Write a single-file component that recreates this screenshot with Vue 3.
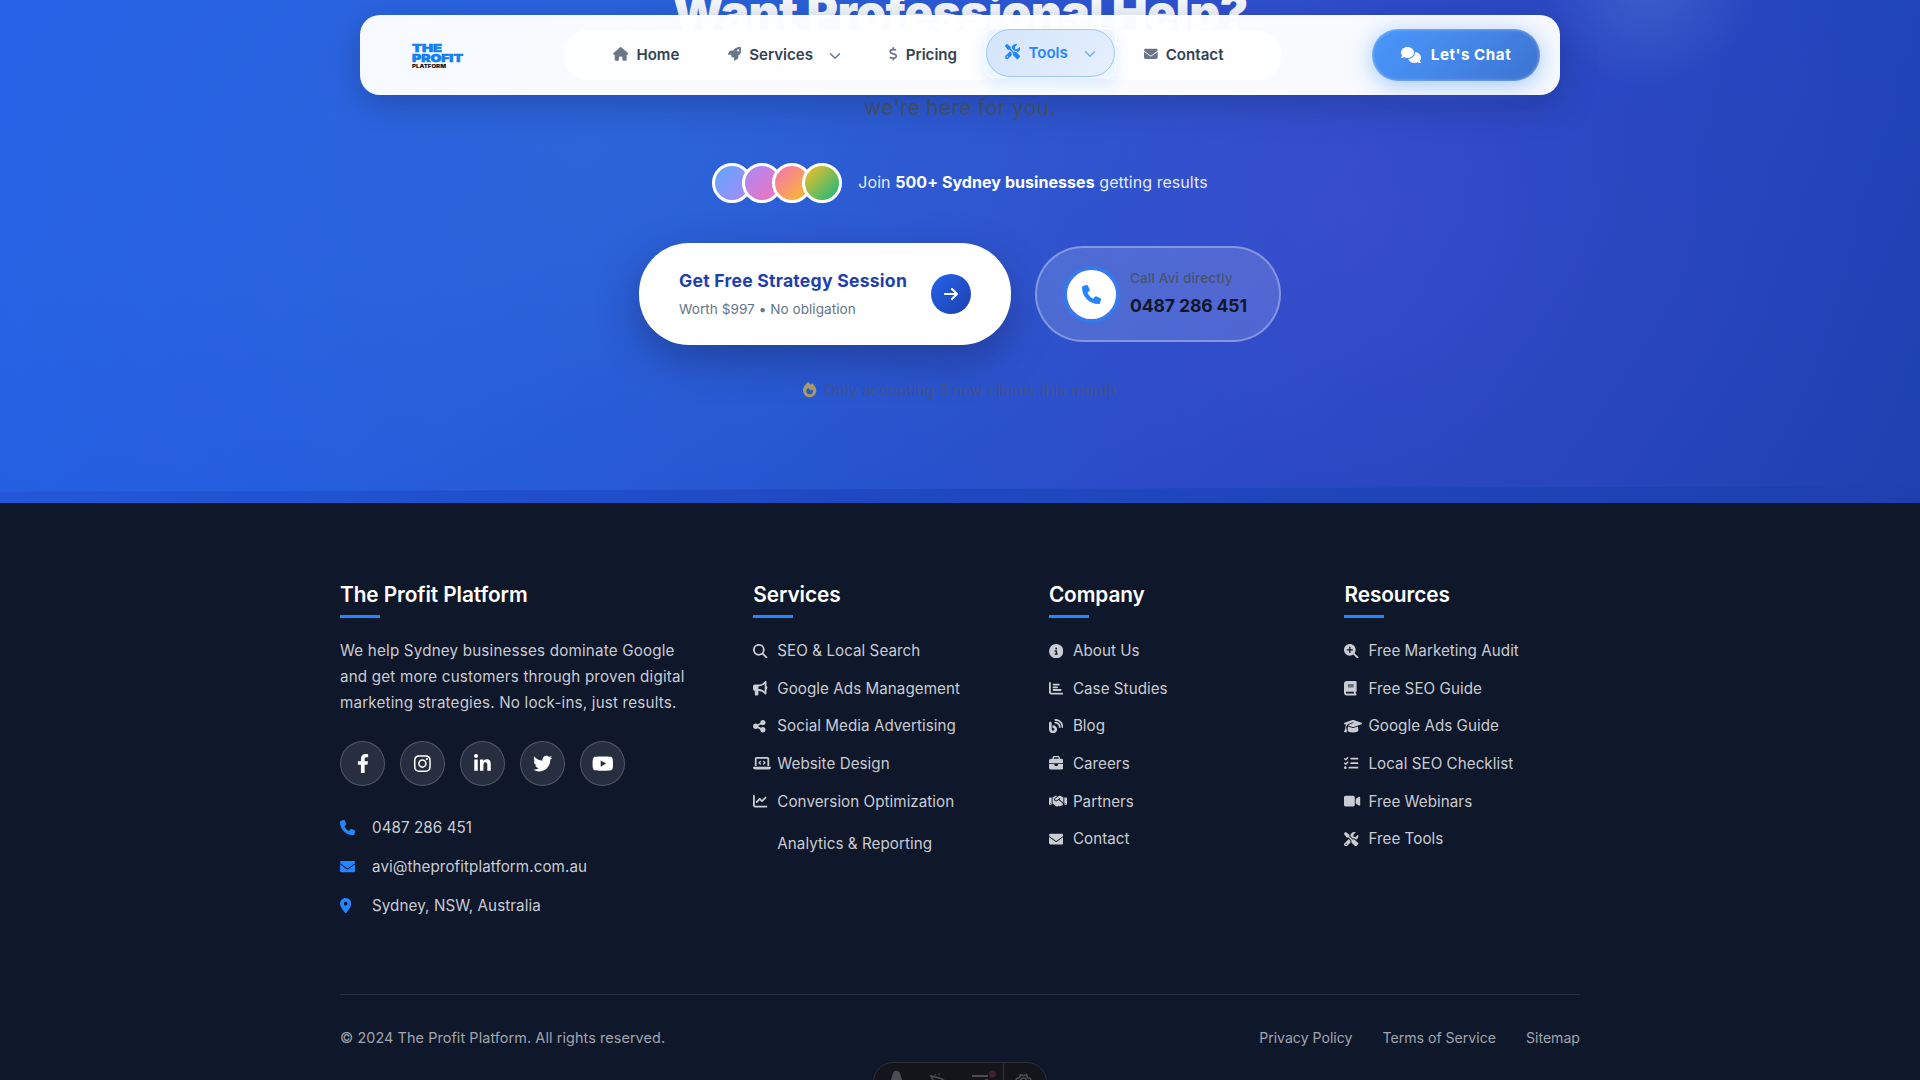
<script setup>
import { h } from 'vue'

const icons = {
  house: [576, 512, 'M575.8 255.5c0 18-15 32.1-32 32.1h-32l.7 160.2c0 2.7-.2 5.4-.5 8.1V472c0 22.1-17.9 40-40 40H456c-1.1 0-2.2 0-3.3-.1c-1.4 .1-2.8 .1-4.2 .1H416 392c-22.1 0-40-17.9-40-40V448 384c0-17.7-14.3-32-32-32H256c-17.7 0-32 14.3-32 32v64 24c0 22.1-17.9 40-40 40H160 128.1c-1.5 0-3-.1-4.5-.2c-1.2 .1-2.4 .2-3.6 .2H104c-22.1 0-40-17.9-40-40V360c0-.9 0-1.9 .1-2.8V287.6H32c-18 0-32-14-32-32.1c0-9 3-17 10-24L266.4 8c7-7 15-8 22-8s15 2 21 7L564.8 231.5c8 7 12 15 11 24z'],
  rocket: [512, 512, 'M156.6 384.9L125.7 354c-8.5-8.5-11.5-20.8-7.7-32.2c3-8.9 7-20.5 11.8-33.8L24 288c-8.6 0-16.6-4.6-20.9-12.1s-4.2-16.7 .2-24.1l52.5-88.5c13-21.9 36.5-35.3 61.9-35.3l82.3 0c2.4-4 4.8-7.7 7.2-11.3C289.1-4.1 411.1-8.1 483.9 5.3c11.6 2.1 20.6 11.2 22.8 22.8c13.4 72.9 9.3 194.8-111.4 276.7c-3.5 2.4-7.3 4.8-11.3 7.2v82.3c0 25.4-13.4 49-35.3 61.9l-88.5 52.5c-7.4 4.4-16.6 4.5-24.1 .2s-12.1-12.2-12.1-20.9V380.8c-14.1 4.9-26.4 8.9-35.7 11.9c-11.2 3.6-23.4 .5-31.8-7.8zM384 168a40 40 0 1 0 0-80 40 40 0 1 0 0 80z'],
  dollar: [320, 512, 'M160 0c17.7 0 32 14.3 32 32V67.7c1.6 .2 3.1 .4 4.7 .7c.4 .1 .7 .1 1.1 .2l48 8.8c17.4 3.2 28.9 19.9 25.7 37.2s-19.9 28.9-37.2 25.7l-47.5-8.7c-31.3-4.6-58.9-1.5-78.3 6.2s-27.2 18.3-29 28.1c-2 10.7-.5 16.7 1.2 20.4c1.8 3.9 5.5 8.3 12.8 13.2c16.3 10.7 41.3 17.7 73.7 26.3l2.9 .8c28.6 7.6 63.6 16.8 89.6 33.8c14.2 9.3 27.6 21.9 35.9 39.5c8.5 17.9 10.3 37.9 6.4 59.2c-6.9 38-33.1 63.4-65.6 76.7c-13.7 5.6-28.6 9.2-44.4 11V480c0 17.7-14.3 32-32 32s-32-14.3-32-32V445.1c-.4-.1-.9-.1-1.3-.2l-.2 0 0 0c-24.4-3.8-64.5-14.3-91.5-26.3c-16.1-7.2-23.4-26.1-16.2-42.2s26.1-23.4 42.2-16.2c20.9 9.3 55.3 18.5 75.2 21.6c31.9 4.7 58.2 2 76-5.3c16.9-6.9 24.6-16.9 26.8-28.9c1.9-10.6 .4-16.7-1.3-20.4c-1.9-4-5.6-8.4-13-13.3c-16.4-10.7-41.5-17.7-74-26.3l-2.8-.7 0 0C119.4 279.3 84.4 270 58.4 253c-14.2-9.3-27.5-22-35.8-39.6c-8.4-17.9-10.1-37.9-6.1-59.2C23.7 116 52.3 91.2 84.8 78.3c13.3-5.3 27.9-8.9 43.2-11V32c0-17.7 14.3-32 32-32z'],
  tools: [512, 512, 'M78.6 5C69.1-2.4 55.6-1.5 47 7L7 47c-8.5 8.5-9.4 22-2.1 31.6l80 104c4.5 5.9 11.6 9.4 19 9.4h54.1l109 109c-14.7 29-10 65.4 14.3 89.6l112 112c12.5 12.5 32.8 12.5 45.3 0l64-64c12.5-12.5 12.5-32.8 0-45.3l-112-112c-24.2-24.2-60.6-29-89.6-14.3l-109-109V104c0-7.5-3.5-14.5-9.4-19L78.6 5zM19.9 396.1C7.2 408.8 0 426.1 0 444.1C0 481.6 30.4 512 67.9 512c18 0 35.3-7.2 48-19.9L233.7 374.3c-7.8-20.9-9-43.6-3.6-65.1l-61.7-61.7L19.9 396.1zM512 144c0-10.5-1.1-20.7-3.2-30.5c-2.4-11.2-16.1-14.1-24.2-6l-63.9 63.9c-3 3-7.1 4.7-11.3 4.7H352c-8.8 0-16-7.2-16-16V102.6c0-4.2 1.7-8.3 4.7-11.3l63.9-63.9c8.1-8.1 5.2-21.8-6-24.2C388.7 1.1 378.5 0 368 0C288.5 0 224 64.5 224 144l0 .8 85.3 85.3c36-9.1 75.8 .5 104 28.7L429 274.5c49-23 83-72.8 83-130.5zM56 432a24 24 0 1 1 48 0 24 24 0 1 1 -48 0z'],
  envelope: [512, 512, 'M48 64C21.5 64 0 85.5 0 112c0 15.1 7.1 29.3 19.2 38.4L236.8 313.6c11.4 8.5 27 8.5 38.4 0L492.8 150.4c12.1-9.1 19.2-23.3 19.2-38.4c0-26.5-21.5-48-48-48H48zM0 176V384c0 35.3 28.7 64 64 64H448c35.3 0 64-28.7 64-64V176L294.4 339.2c-22.8 17.1-54 17.1-76.8 0L0 176z'],
  comments: [640, 512, 'M208 352c114.9 0 208-78.8 208-176S322.9 0 208 0S0 78.8 0 176c0 38.6 14.7 74.3 39.6 103.4c-3.5 9.4-8.7 17.7-14.2 24.7c-4.8 6.2-9.7 11-13.3 14.3c-1.8 1.6-3.3 2.9-4.3 3.7c-.5 .4-.9 .7-1.1 .8l-.2 .2C1 327.2-1.4 334.4 .8 340.9S9.1 352 16 352c21.8 0 43.8-5.6 62.1-12.5c9.2-3.5 17.8-7.4 25.3-11.4C134.1 343.3 169.8 352 208 352zM448 176c0 112.3-99.1 196.9-216.5 207C255.8 457.4 336.4 512 432 512c38.2 0 73.9-8.7 104.7-23.9c7.5 4 16 7.9 25.2 11.4c18.3 6.9 40.3 12.5 62.1 12.5c6.9 0 13.1-4.5 15.2-11.1c2.1-6.6-.2-13.8-5.8-17.9l-.2-.2c-.2-.2-.6-.4-1.1-.8c-1-.8-2.5-2-4.3-3.7c-3.6-3.3-8.5-8.1-13.3-14.3c-5.5-7-10.7-15.4-14.2-24.7c24.9-29 39.6-64.7 39.6-103.4c0-92.8-84.9-168.9-192.6-175.5c.4 5.1 .6 10.3 .6 15.5z'],
  phone: [512, 512, 'M164.9 24.6c-7.7-18.6-28-28.5-47.4-23.2l-88 24C12.1 30.2 0 46 0 64C0 311.4 200.6 512 448 512c18 0 33.8-12.1 38.6-29.5l24-88c5.3-19.4-4.6-39.7-23.2-47.4l-96-40c-16.3-6.8-35.2-2.1-46.3 11.6L304.7 368C234.3 334.7 177.3 277.7 144 207.3L193.3 167c13.7-11.2 18.4-30 11.6-46.3l-40-96z'],
  pin: [384, 512, 'M215.7 499.2C267 435 384 279.4 384 192C384 86 298 0 192 0S0 86 0 192c0 87.4 117 243 168.3 307.2c12.3 15.3 35.1 15.3 47.4 0zM192 128a64 64 0 1 1 0 128 64 64 0 1 1 0-128z'],
  arrow: [448, 512, 'M438.6 278.6c12.5-12.5 12.5-32.8 0-45.3l-160-160c-12.5-12.5-32.8-12.5-45.3 0s-12.5 32.8 0 45.3L338.8 224 32 224c-17.7 0-32 14.3-32 32s14.3 32 32 32l306.7 0L233.4 393.4c-12.5 12.5-12.5 32.8 0 45.3s32.8 12.5 45.3 0l160-160z'],
  fire: [448, 512, 'M159.3 5.4c7.8-7.3 19.9-7.2 27.7 .1c27.6 25.9 53.5 53.8 77.7 84c11-14.4 23.5-30.1 37-42.9c7.9-7.4 20.1-7.4 28 .1c34.6 33 63.9 76.6 84.5 118c20.3 40.8 33.8 82.5 33.8 111.9C448 404.2 348.2 512 224 512C98.4 512 0 404.1 0 276.5c0-38.4 17.8-85.3 45.4-131.7C73.3 97.7 112.7 48.6 159.3 5.4zM225.7 416c25.3 0 47.7-7 68.8-21c42.1-29.4 53.4-88.2 28.1-134.4c-4.5-9-16-9.6-22.5-2l-25.2 29.3c-6.6 7.6-18.5 7.4-24.7-.5c-16.5-21-46-58.5-62.8-79.8c-6.3-8-18.3-8.1-24.7-.1c-33.8 42.5-50.8 69.3-50.8 99.4C112 375.4 162.6 416 225.7 416z'],
  facebook: [320, 512, 'M279.14 288l14.22-92.66h-88.91v-60.13c0-25.35 12.42-50.06 52.24-50.06h40.42V6.26S260.43 0 225.36 0c-73.22 0-121.08 44.38-121.08 124.72v70.62H22.89V288h81.39v224h100.17V288z'],
  instagram: [448, 512, 'M224.1 141c-63.6 0-114.9 51.3-114.9 114.9s51.3 114.9 114.9 114.9S339 319.5 339 255.9 287.7 141 224.1 141zm0 189.6c-41.1 0-74.7-33.5-74.7-74.7s33.5-74.7 74.7-74.7 74.7 33.5 74.7 74.7-33.6 74.7-74.7 74.7zm146.4-194.3c0 14.9-12 26.8-26.8 26.8-14.9 0-26.8-12-26.8-26.8s12-26.8 26.8-26.8 26.8 12 26.8 26.8zm76.1 27.2c-1.7-35.9-9.9-67.7-36.2-93.9-26.2-26.2-58-34.4-93.9-36.2-37-2.1-147.9-2.1-184.9 0-35.8 1.7-67.6 9.9-93.9 36.1s-34.4 58-36.2 93.9c-2.1 37-2.1 147.9 0 184.9 1.7 35.9 9.9 67.7 36.2 93.9s58 34.4 93.9 36.2c37 2.1 147.9 2.1 184.9 0 35.9-1.7 67.7-9.9 93.9-36.2 26.2-26.2 34.4-58 36.2-93.9 2.1-37 2.1-147.8 0-184.8zM398.8 388c-7.8 19.6-22.9 34.7-42.6 42.6-29.5 11.7-99.5 9-132.1 9s-102.7 2.6-132.1-9c-19.6-7.8-34.7-22.9-42.6-42.6-11.7-29.5-9-99.5-9-132.1s-2.6-102.7 9-132.1c7.8-19.6 22.9-34.7 42.6-42.6 29.5-11.7 99.5-9 132.1-9s102.7-2.6 132.1 9c19.6 7.8 34.7 22.9 42.6 42.6 11.7 29.5 9 99.5 9 132.1s2.7 102.7-9 132.1z'],
  linkedin: [448, 512, 'M100.28 448H7.4V148.9h92.88zM53.79 108.1C24.09 108.1 0 83.5 0 53.8a53.79 53.79 0 0 1 107.58 0c0 29.7-24.1 54.3-53.79 54.3zM447.9 448h-92.68V302.4c0-34.7-.7-79.2-48.29-79.2-48.29 0-55.69 37.7-55.69 76.7V448h-92.78V148.9h89.08v40.8h1.3c12.4-23.5 42.69-48.3 87.88-48.3 94 0 111.28 61.9 111.28 142.3V448z'],
  twitter: [512, 512, 'M459.37 151.716c.325 4.548.325 9.097.325 13.645 0 138.72-105.583 298.558-298.558 298.558-59.452 0-114.68-17.219-161.137-47.106 8.447.974 16.568 1.299 25.34 1.299 49.055 0 94.213-16.568 130.274-44.832-46.132-.975-84.792-31.188-98.112-72.772 6.498.974 12.995 1.624 19.818 1.624 9.421 0 18.843-1.3 27.614-3.573-48.081-9.747-84.143-51.98-84.143-102.985v-1.299c13.969 7.797 30.214 12.67 47.431 13.319-28.264-18.843-46.781-51.005-46.781-87.391 0-19.492 5.197-37.36 14.294-52.954 51.655 63.675 129.3 105.258 216.365 109.807-1.624-7.797-2.599-15.918-2.599-24.04 0-57.828 46.782-104.934 104.934-104.934 30.213 0 57.502 12.67 76.67 33.137 23.715-4.548 46.456-13.32 66.599-25.34-7.798 24.366-24.366 44.833-46.132 57.827 21.117-2.273 41.584-8.122 60.426-16.243-14.292 20.791-32.161 39.308-52.628 54.253z'],
  youtube: [576, 512, 'M549.655 124.083c-6.281-23.65-24.787-42.276-48.284-48.597C458.781 64 288 64 288 64S117.22 64 74.629 75.486c-23.497 6.322-42.003 24.947-48.284 48.597-11.412 42.867-11.412 132.305-11.412 132.305s0 89.438 11.412 132.305c6.281 23.65 24.787 41.5 48.284 47.821C117.22 448 288 448 288 448s170.78 0 213.371-11.486c23.497-6.321 42.003-24.171 48.284-47.821 11.412-42.867 11.412-132.305 11.412-132.305s0-89.438-11.412-132.305zm-317.51 213.508V175.185l142.739 81.205-142.739 81.201z'],
  search: [512, 512, 'M416 208c0 45.9-14.9 88.3-40 122.7L502.6 457.4c12.5 12.5 12.5 32.8 0 45.3s-32.8 12.5-45.3 0L330.7 376c-34.4 25.2-76.8 40-122.7 40C93.1 416 0 322.9 0 208S93.1 0 208 0S416 93.1 416 208zM208 352a144 144 0 1 0 0-288 144 144 0 1 0 0 288z'],
  searchPlus: [512, 512, 'M416 208c0 45.9-14.9 88.3-40 122.7L502.6 457.4c12.5 12.5 12.5 32.8 0 45.3s-32.8 12.5-45.3 0L330.7 376c-34.4 25.2-76.8 40-122.7 40C93.1 416 0 322.9 0 208S93.1 0 208 0S416 93.1 416 208zM184 100V184H100V232H184V316H232V232H316V184H232V100z'],
  bullhorn: [512, 512, 'M480 32c0-12.9-7.8-24.6-19.8-29.6s-25.7-2.2-34.9 6.9L381.7 53c-48 48-113.1 75-181 75H192 160 64c-35.3 0-64 28.7-64 64v96c0 35.3 28.7 64 64 64l0 128c0 17.7 14.3 32 32 32h64c17.7 0 32-14.3 32-32V352l8.7 0c67.9 0 133 27 181 75l43.6 43.6c9.2 9.2 22.9 11.9 34.9 6.9s19.8-16.6 19.8-29.6V300.4c18.6-8.8 32-32.5 32-60.4s-13.4-51.6-32-60.4V32zm-64 76.7V240 371.3C357.2 317.8 280.5 288 200.7 288H192V192h8.7c79.8 0 156.5-29.8 215.3-83.3z'],
  share: [448, 512, 'M352 224c53 0 96-43 96-96s-43-96-96-96s-96 43-96 96c0 4 .2 8 .7 11.9l-94.1 47C145.4 170.2 121.9 160 96 160c-53 0-96 43-96 96s43 96 96 96c25.9 0 49.4-10.2 66.6-26.9l94.1 47c-.5 3.9-.7 7.8-.7 11.9c0 53 43 96 96 96s96-43 96-96s-43-96-96-96c-25.9 0-49.4 10.2-66.6 26.9l-94.1-47c.5-3.9 .7-7.8 .7-11.9s-.2-8-.7-11.9l94.1-47C302.6 213.8 326.1 224 352 224z'],
  laptop: [640, 512, 'M64 96c0-35.3 28.7-64 64-64H512c35.3 0 64 28.7 64 64V352H512V96H128V352H64V96zM0 403.2C0 392.6 8.6 384 19.2 384H620.8c10.6 0 19.2 8.6 19.2 19.2c0 42.4-34.4 76.8-76.8 76.8H76.8C34.4 480 0 445.6 0 403.2zM281 209l-31 31 31 31c9.4 9.4 9.4 24.6 0 33.9s-24.6 9.4-33.9 0l-48-48c-9.4-9.4-9.4-24.6 0-33.9l48-48c9.4-9.4 24.6-9.4 33.9 0s9.4 24.6 0 33.9zM393 175l48 48c9.4 9.4 9.4 24.6 0 33.9l-48 48c-9.4 9.4-24.6 9.4-33.9 0s-9.4-24.6 0-33.9l31-31-31-31c-9.4-9.4-9.4-24.6 0-33.9s24.6-9.4 33.9 0z'],
  chartLine: [512, 512, 'M64 64c0-17.7-14.3-32-32-32S0 46.3 0 64V400c0 44.2 35.8 80 80 80H480c17.7 0 32-14.3 32-32s-14.3-32-32-32H80c-8.8 0-16-7.2-16-16V64zm406.6 86.6c12.5-12.5 12.5-32.8 0-45.3s-32.8-12.5-45.3 0L320 210.7l-57.4-57.4c-12.5-12.5-32.8-12.5-45.3 0l-112 112c-12.5 12.5-12.5 32.8 0 45.3s32.8 12.5 45.3 0L240 221.3l57.4 57.4c12.5 12.5 32.8 12.5 45.3 0l128-128z'],
  info: [512, 512, 'M256 512A256 256 0 1 0 256 0a256 256 0 1 0 0 512zM216 336h24V272H216c-13.3 0-24-10.7-24-24s10.7-24 24-24h48c13.3 0 24 10.7 24 24v88h8c13.3 0 24 10.7 24 24s-10.7 24-24 24H216c-13.3 0-24-10.7-24-24s10.7-24 24-24zm40-208a32 32 0 1 1 0 64 32 32 0 1 1 0-64z'],
  chartBar: [512, 512, 'M32 32c17.7 0 32 14.3 32 32V400c0 8.8 7.2 16 16 16H480c17.7 0 32 14.3 32 32s-14.3 32-32 32H80c-44.2 0-80-35.8-80-80V64C0 46.3 14.3 32 32 32zm96 96c0-17.7 14.3-32 32-32l192 0c17.7 0 32 14.3 32 32s-14.3 32-32 32H160c-17.7 0-32-14.3-32-32zm32 64H288c17.7 0 32 14.3 32 32s-14.3 32-32 32H160c-17.7 0-32-14.3-32-32s14.3-32 32-32zm0 96H416c17.7 0 32 14.3 32 32s-14.3 32-32 32H160c-17.7 0-32-14.3-32-32s14.3-32 32-32z'],
  blog: [512, 512, 'M192 32c0 17.7 14.3 32 32 32c123.7 0 224 100.3 224 224c0 17.7 14.3 32 32 32s32-14.3 32-32C512 128.9 383.1 0 224 0c-17.7 0-32 14.3-32 32zm0 96c0 17.7 14.3 32 32 32c70.7 0 128 57.3 128 128c0 17.7 14.3 32 32 32s32-14.3 32-32c0-106-86-192-192-192c-17.7 0-32 14.3-32 32zM96 144c0-26.5-21.5-48-48-48S0 117.5 0 144V368c0 79.5 64.5 144 144 144s144-64.5 144-144s-64.5-144-144-144H128v96h16c26.5 0 48 21.5 48 48s-21.5 48-48 48s-48-21.5-48-48V144z'],
  briefcase: [512, 512, 'M184 48H328c4.4 0 8 3.6 8 8V96H176V56c0-4.4 3.6-8 8-8zm-56 8V96H64C28.7 96 0 124.7 0 160v96H192 320 512V160c0-35.3-28.7-64-64-64H384V56c0-30.9-25.1-56-56-56H184c-30.9 0-56 25.1-56 56zM512 288H320v32c0 17.7-14.3 32-32 32H224c-17.7 0-32-14.3-32-32V288H0V416c0 35.3 28.7 64 64 64H448c35.3 0 64-28.7 64-64V288z'],
  handshake: [640, 512, 'M323.4 85.2l-96.8 78.4c-16.1 13-19.2 36.4-7 53.1c12.9 17.8 38 21.3 55.3 7.8l99.3-77.2c7-5.4 17-4.2 22.5 2.8s4.2 17-2.8 22.5l-20.9 16.2L512 316.8V128h-.7l-3.9-2.5L434.8 79c-15.3-9.8-33.2-15-51.4-15c-21.8 0-43 7.5-60 21.2zm22.8 124.4l-51.7 40.2C263 274.3 217.3 268 193.7 235.6c-22.2-30.5-16.6-73.1 12.7-96.8l83.2-67.3c-11.6-4.9-24.1-7.4-36.8-7.4C234 64 215.7 69.6 200 80l-72 48V352h28.2l91.4 83.4c19.6 17.9 49.9 16.5 67.8-3.1c5.5-6.1 9.2-13.2 11.1-20.6l17 15.6c19.5 17.9 49.9 16.6 67.8-2.9c4.5-4.9 7.8-10.6 9.9-16.5c19.4 13 45.8 10.3 62.1-7.5c17.9-19.5 16.6-49.9-2.9-67.8l-134.2-123zM16 128c-8.8 0-16 7.2-16 16V352c0 17.7 14.3 32 32 32H64c17.7 0 32-14.3 32-32V128H16zM48 320a16 16 0 1 1 0 32 16 16 0 1 1 0-32zM544 128V352c0 17.7 14.3 32 32 32h32c17.7 0 32-14.3 32-32V144c0-8.8-7.2-16-16-16H544zm32 208a16 16 0 1 1 32 0 16 16 0 1 1 -32 0z'],
  book: [448, 512, 'M96 0C43 0 0 43 0 96V416c0 53 43 96 96 96H384h32c17.7 0 32-14.3 32-32s-14.3-32-32-32V384c17.7 0 32-14.3 32-32V32c0-17.7-14.3-32-32-32H384 96zm0 384H352v64H96c-17.7 0-32-14.3-32-32s14.3-32 32-32zm32-240c0-8.8 7.2-16 16-16H336c8.8 0 16 7.2 16 16s-7.2 16-16 16H144c-8.8 0-16-7.2-16-16zm16 48H336c8.8 0 16 7.2 16 16s-7.2 16-16 16H144c-8.8 0-16-7.2-16-16s7.2-16 16-16z'],
  graduation: [640, 512, 'M320 32c-8.1 0-16.1 1.4-23.7 4.1L15.8 137.4C6.3 140.9 0 149.9 0 160s6.3 19.1 15.8 22.6l57.9 20.9C57.3 229.3 48 259.8 48 291.9v28.1c0 28.4-10.8 57.7-22.3 80.8c-6.5 13-13.9 25.8-22.5 37.6C0 442.7-.9 448.3 .9 453.4s6 8.9 11.2 10.2l64 16c4.2 1.1 8.7 .3 12.4-2s6.3-6.1 7.1-10.4c8.6-42.8 4.3-81.2-2.1-108.7C90.3 344.3 86 329.8 80 316.5V291.9c0-30.2 10.2-58.7 27.9-81.5c12.9-15.5 29.6-28 49.2-35.7l157-61.7c8.2-3.2 17.5 .8 20.7 9s-.8 17.5-9 20.7l-157 61.7c-12.4 4.9-23.3 12.4-32.2 21.6l159.6 57.6c7.6 2.7 15.6 4.1 23.7 4.1s16.1-1.4 23.7-4.1L624.2 182.6c9.5-3.4 15.8-12.5 15.8-22.6s-6.3-19.1-15.8-22.6L343.7 36.1C336.1 33.4 328.1 32 320 32zM128 408c0 35.3 86 72 192 72s192-36.7 192-72L496.7 262.6 354.5 314c-11.1 4-22.8 6-34.5 6s-23.5-2-34.5-6L143.3 262.6 128 408z'],
  listCheck: [512, 512, 'M152.1 38.2c9.9 8.9 10.7 24 1.8 33.9l-72 80c-4.4 4.9-10.6 7.8-17.2 7.9s-12.9-2.4-17.6-7L7 113C-2.3 103.6-2.3 88.4 7 79s24.6-9.4 33.9 0l22.1 22.1 55.1-61.2c8.9-9.9 24-10.7 33.9-1.8zm0 160c9.9 8.9 10.7 24 1.8 33.9l-72 80c-4.4 4.9-10.6 7.8-17.2 7.9s-12.9-2.4-17.6-7L7 273c-9.4-9.4-9.4-24.6 0-33.9s24.6-9.4 33.9 0l22.1 22.1 55.1-61.2c8.9-9.9 24-10.7 33.9-1.8zM224 96c0-17.7 14.3-32 32-32H480c17.7 0 32 14.3 32 32s-14.3 32-32 32H256c-17.7 0-32-14.3-32-32zm0 160c0-17.7 14.3-32 32-32H480c17.7 0 32 14.3 32 32s-14.3 32-32 32H256c-17.7 0-32-14.3-32-32zM160 416c0-17.7 14.3-32 32-32H480c17.7 0 32 14.3 32 32s-14.3 32-32 32H192c-17.7 0-32-14.3-32-32zM48 368a48 48 0 1 1 0 96 48 48 0 1 1 0-96z'],
  video: [576, 512, 'M0 128C0 92.7 28.7 64 64 64H320c35.3 0 64 28.7 64 64V384c0 35.3-28.7 64-64 64H64c-35.3 0-64-28.7-64-64V128zM559.1 99.8c10.4 5.6 16.9 16.4 16.9 28.2V384c0 11.8-6.5 22.6-16.9 28.2s-23 5-32.9-1.6l-96-64L416 337.1V320 192 174.9l14.2-9.5 96-64c9.8-6.5 22.4-7.2 32.9-1.6z'],
}

const Icon = ({ name }) => {
  const [w, ht, d] = icons[name]
  return h(
    'svg',
    { viewBox: `0 0 ${w} ${ht}`, fill: 'currentColor', style: { width: `${w / ht}em`, height: '1em' } },
    [h('path', { d, 'fill-rule': 'evenodd' })],
  )
}
Icon.props = ['name']

const nav = [
  { label: 'Home', icon: 'house' },
  { label: 'Services', icon: 'rocket', menu: true },
  { label: 'Pricing', icon: 'dollar' },
  { label: 'Tools', icon: 'tools', menu: true, active: true },
  { label: 'Contact', icon: 'envelope' },
]
const socials = ['facebook', 'instagram', 'linkedin', 'twitter', 'youtube']
const contacts = [
  ['phone', '0487 286 451'],
  ['envelope', 'avi@theprofitplatform.com.au'],
  ['pin', 'Sydney, NSW, Australia'],
]
const columns = [
  {
    title: 'Services',
    links: [
      ['search', 'SEO & Local Search'],
      ['bullhorn', 'Google Ads Management'],
      ['share', 'Social Media Advertising'],
      ['laptop', 'Website Design'],
      ['chartLine', 'Conversion Optimization'],
      [null, 'Analytics & Reporting'],
    ],
  },
  {
    title: 'Company',
    links: [
      ['info', 'About Us'],
      ['chartBar', 'Case Studies'],
      ['blog', 'Blog'],
      ['briefcase', 'Careers'],
      ['handshake', 'Partners'],
      ['envelope', 'Contact'],
    ],
  },
  {
    title: 'Resources',
    links: [
      ['searchPlus', 'Free Marketing Audit'],
      ['book', 'Free SEO Guide'],
      ['graduation', 'Google Ads Guide'],
      ['listCheck', 'Local SEO Checklist'],
      ['video', 'Free Webinars'],
      ['tools', 'Free Tools'],
    ],
  },
]
</script>

<template>
  <div class="page">
    <header class="header">
      <svg class="logo" width="54" height="32" viewBox="0 0 54 32">
        <g font-family="Inter, sans-serif" font-weight="900">
          <text x="0" y="12.800" font-size="11" textLength="30" lengthAdjust="spacingAndGlyphs" fill="#1180f5" stroke="#1180f5" stroke-width=".6">THE</text>
          <text x="0" y="23" font-size="11" textLength="51" lengthAdjust="spacingAndGlyphs" fill="#1180f5" stroke="#1180f5" stroke-width=".6">PROFIT</text>
          <text x="0" y="29" font-size="5" textLength="34" lengthAdjust="spacingAndGlyphs" fill="#111">PLATFORM</text>
        </g>
      </svg>
      <nav class="nav">
        <a v-for="n in nav" :key="n.label" class="nav-item" :class="{ active: n.active }">
          <Icon :name="n.icon" />
          <span>{{ n.label }}</span>
          <svg v-if="n.menu" class="chev" width="12" height="8" viewBox="0 0 12 8" fill="none" stroke="currentColor" stroke-width="1.3" stroke-linecap="round" stroke-linejoin="round">
            <path d="M1.500 1.700 6 6.200l4.500-4.500" />
          </svg>
        </a>
      </nav>
      <a class="chat"><Icon name="comments" /><span>Let's Chat</span></a>
    </header>

    <section class="hero">
      <div class="glow"></div>
      <h2>Want Professional Help?</h2>
      <p class="lead">we're here for you.</p>
      <div class="proof">
        <div class="avatars"><i class="a1"></i><i class="a2"></i><i class="a3"></i><i class="a4"></i></div>
        <span>Join <b>500+ Sydney businesses</b> getting results</span>
      </div>
      <div class="actions">
        <a class="primary">
          <span class="stack"><b>Get Free Strategy Session</b><small>Worth $997 • No obligation</small></span>
          <span class="go"><Icon name="arrow" /></span>
        </a>
        <a class="call">
          <span class="ring"><Icon name="phone" /></span>
          <span class="stack"><small>Call Avi directly</small><b>0487 286 451</b></span>
        </a>
      </div>
      <p class="urgency"><Icon name="fire" /><span>Only accepting 5 new clients this month</span></p>
    </section>

    <footer class="footer">
      <div class="wrap">
        <div class="grid">
          <div>
            <h3>The Profit Platform</h3>
            <p class="about">We help Sydney businesses dominate Google and get more customers through proven digital marketing strategies. No lock-ins, just results.</p>
            <div class="socials">
              <a v-for="s in socials" :key="s"><Icon :name="s" /></a>
            </div>
            <ul class="contacts">
              <li v-for="c in contacts" :key="c[1]"><span class="ic"><Icon :name="c[0]" /></span><span>{{ c[1] }}</span></li>
            </ul>
          </div>
          <div v-for="col in columns" :key="col.title">
            <h3>{{ col.title }}</h3>
            <ul class="links">
              <li v-for="l in col.links" :key="l[1]" :class="{ bare: !l[0] }">
                <span class="ic"><Icon v-if="l[0]" :name="l[0]" /></span><span>{{ l[1] }}</span>
              </li>
            </ul>
          </div>
        </div>
        <div class="legal">
          <span>© 2024 The Profit Platform. All rights reserved.</span>
          <div><a>Privacy Policy</a><a>Terms of Service</a><a>Sitemap</a></div>
        </div>
      </div>
    </footer>

    <div class="toolbar">
      <svg width="173" height="30" viewBox="0 0 173 30" fill="none" stroke="#4c4c52" stroke-width="1.6">
        <path d="M18 20l2.500-7.500a3 3 0 0 1 6 0L29 20z" fill="#4c4c52" />
        <path d="M62 22l-4-8 10 2.500 4 2.500M62 12.500l.6 1M66 11.500l.3 1.200" />
        <path d="M99 14h16M112 18.500l3-.8" stroke-width="2" />
        <circle cx="119.500" cy="12" r="3.500" fill="#47202e" stroke="none" />
        <path d="M130.500 0v30" stroke="#2c2c31" />
        <path d="M143 20l.5-3.500 3-1 1-3 3 1.200 3-1.200 1 3 3 1 .5 3.500" />
        <circle cx="150.500" cy="19" r="3" />
      </svg>
    </div>
  </div>
</template>

<style>
body { background: #0f172a; overflow: hidden; }
</style>

<style scoped>
.page { position: relative; width: 1920px; height: 1080px; overflow: hidden; font-family: Inter, sans-serif; background: #0f172a; }
.page svg { display: block; flex: none; }
ul { list-style: none; margin: 0; padding: 0; }
p, h2, h3 { margin: 0; }

.header { position: absolute; z-index: 5; left: 360px; top: 15px; width: 1200px; height: 80px; box-sizing: border-box; padding: 0 20px 0 52px; border-radius: 20px; display: flex; align-items: center; background: linear-gradient(90deg, rgba(250, 253, 255, .985), rgba(255, 255, 255, .98) 50%, rgba(250, 252, 255, .985)); box-shadow: 0 10px 34px rgba(20, 40, 100, .36); }
.nav { position: relative; z-index: 0; margin-left: 97px; width: 719px; height: 50px; box-sizing: border-box; padding-left: 31px; border-radius: 25px; background: rgba(255, 255, 255, .75); display: flex; align-items: center; gap: 10.200px; }
.nav-item { position: relative; height: 48px; padding: 0 19px; box-sizing: border-box; display: flex; align-items: center; gap: 8px; color: #334155; font-size: 15.100px; font-weight: 600; border-radius: 24px; margin-top: -1px; }
.nav-item > svg:first-child { font-size: 13.7px; color: #6b7688; margin-top: -1px; }
.nav-item .chev { color: #64748b; margin-left: 8px; margin-top: 2px; }
.nav-item.active { color: #2684ff; border: 1px solid #9cc6fb; padding: 0 18px; margin-top: -5px; background: linear-gradient(135deg, #d3e4fc, #e6f0fe); }
.nav-item.active::before { content: ''; position: absolute; z-index: -1; inset: -2px; border-radius: 9px; border: 1px solid #fff; background: #eff5fe; box-shadow: 0 6px 14px rgba(38, 132, 255, .15); }
.nav-item.active > svg:first-child { font-size: 15.2px; color: #2684ff; }
.nav-item.active .chev { color: #6aa8fa; }
.chat { margin-left: auto; width: 168px; height: 52px; border-radius: 26px; display: flex; align-items: center; justify-content: center; gap: 10px; color: #fff; font-size: 15.2px; font-weight: 700; letter-spacing: .5px; background: linear-gradient(135deg, #4a97fb 0%, #4589ea 45%, #3c72d0 100%); box-shadow: 0 4px 22px rgba(74, 151, 251, .5), inset 0 0 3px 1px rgba(255, 255, 255, .3); }
.chat svg { font-size: 16px; }
.chat span { margin-top: -1px; }

.hero { position: relative; height: 503px; overflow: hidden; display: flex; flex-direction: column; align-items: center; background: linear-gradient(100deg, #2259db 0%, #1f48c1 50%, #1e40af 100%); }
.glow { position: absolute; left: -20px; top: -40px; width: 1960px; height: 529px; transform: rotate(-.17deg); background:
  radial-gradient(circle 110px at 1670px 20px, rgba(120, 160, 225, .26), transparent),
  radial-gradient(ellipse 600px 620px at 1375px 250px, rgba(84, 80, 215, .42), rgba(76, 78, 205, .22) 45%, transparent),
  radial-gradient(ellipse 860px 560px at 620px 190px, rgba(70, 125, 215, .32), transparent),
  linear-gradient(125deg, #2563eb 0%, #225adc 32%, #2349c6 64%, #1e40af 100%); }
.hero > :not(.glow) { position: relative; }
h2 { height: 68px; margin-top: -21.500px; line-height: 68px; font-size: 48px; font-weight: 900; letter-spacing: -.65px; color: #f8fafc; white-space: nowrap; }
.lead { margin-top: 43px; height: 36px; line-height: 36px; font-size: 20.8px; letter-spacing: .32px; color: #475569; }
.proof { margin-top: 37.500px; height: 40px; display: flex; align-items: center; gap: 16px; color: rgba(255, 255, 255, .9); font-size: 16px; letter-spacing: .06px; }
.proof > span { margin-top: -2px; }
.proof b { font-weight: 700; color: #fff; }
.avatars { display: flex; }
.avatars i { width: 40px; height: 40px; box-sizing: border-box; border: 3px solid #fff; border-radius: 50%; }
.avatars i + i { margin-left: -10px; }
.a1 { background: linear-gradient(135deg, #60a5fa, #a78bfa); }
.a2 { background: linear-gradient(135deg, #a78bfa, #f472b6); }
.a3 { background: linear-gradient(135deg, #f472b6, #fbbf24); }
.a4 { background: linear-gradient(135deg, #fbbf24, #10b981); }
.actions { margin-top: 40px; display: flex; align-items: center; gap: 24px; }
.primary { width: 372px; height: 102px; box-sizing: border-box; padding: 0 40px; border-radius: 50px; background: #fff; display: flex; align-items: center; justify-content: space-between; box-shadow: 0 15px 40px rgba(20, 30, 80, .4); }
.stack { display: flex; flex-direction: column; white-space: nowrap; }
.primary .stack { margin-top: -2px; }
.primary b { font-size: 17.6px; line-height: 28px; font-weight: 700; letter-spacing: .24px; color: #1e40af; }
.primary small { font-size: 13.6px; line-height: 22px; margin-top: 3px; letter-spacing: .03px; color: #64748b; }
.go { width: 40px; height: 40px; border-radius: 50%; background: linear-gradient(135deg, #2563eb, #1e40af); color: #fff; display: flex; align-items: center; justify-content: center; font-size: 16px; }
.call { width: 246px; height: 96px; box-sizing: border-box; padding-left: 30px; border: 2px solid rgba(255, 255, 255, .3); border-radius: 50px; background: rgba(255, 255, 255, .15); display: flex; align-items: center; gap: 14px; }
.ring { width: 49px; height: 49px; border-radius: 50%; background: #fff; color: #2684ff; font-size: 19px; display: flex; align-items: center; justify-content: center; box-shadow: 0 0 0 1px #5a72d4, 0 0 0 4px #2f7bf0; }
.call small { font-size: 13.6px; line-height: 22px; font-weight: 500; letter-spacing: .13px; color: #475569; margin-top: -2px; }
.call b { font-size: 17.6px; line-height: 28px; margin-top: 3px; font-weight: 700; letter-spacing: -.13px; color: #0f172a; }
.urgency { margin-top: 33px; height: 24px; display: flex; align-items: center; gap: 8px; color: #41548a; font-size: 15.2px; letter-spacing: .15px; }
.urgency svg { color: #a99a6c; }

.footer { height: 577px; background: #0f172a; color: #c9ccd2; }
.wrap { width: 1240px; margin: 0 auto; padding-top: 75px; }
.grid { display: grid; grid-template-columns: 1.5fr 1fr 1fr 1fr; column-gap: 60px; height: 416px; }
h3 { height: 40px; line-height: 34px; box-sizing: border-box; font-size: 20.8px; font-weight: 600; letter-spacing: -.08px; color: #fff; margin-bottom: 20px; background: linear-gradient(#2684ff, #2684ff) 0 100% / 40px 3px no-repeat; }
.about { width: 353px; font-size: 15.2px; line-height: 25.84px; letter-spacing: .18px; }
.socials { display: flex; gap: 15px; margin-top: 25px; }
.socials a { width: 45px; height: 45px; box-sizing: border-box; border-radius: 50%; border: 1px solid rgba(255, 255, 255, .2); background: rgba(255, 255, 255, .1); color: #fff; font-size: 19.2px; display: flex; align-items: center; justify-content: center; padding-top: 1px; }
.contacts { margin-top: 29px; }
.contacts li { display: flex; align-items: center; gap: 12px; height: 26px; margin-bottom: 13px; font-size: 15.2px; letter-spacing: .07px; }
.contacts .ic { width: 20px; color: #2684ff; }
.links li { display: flex; align-items: center; gap: 8px; height: 25.6px; margin-bottom: 12px; font-size: 15.2px; letter-spacing: .04px; white-space: nowrap; }
.links .ic { width: 16px; font-size: 14.4px; }
.links .bare { margin-top: 16.500px; }
.legal { border-top: 1px solid rgba(255, 255, 255, .1); display: flex; justify-content: space-between; align-items: center; height: 85px; font-size: 14.4px; letter-spacing: .09px; color: #a0a5af; }
.legal div { display: flex; gap: 30px; font-size: 14.1px; letter-spacing: 0; }

.toolbar { position: absolute; left: 873px; top: 1062px; width: 174px; height: 40px; box-sizing: border-box; border: 1px solid #2d3038; border-radius: 20px; background: #14151b; overflow: hidden; }
.toolbar svg { margin: -1px 0 0 -1px; }
</style>
